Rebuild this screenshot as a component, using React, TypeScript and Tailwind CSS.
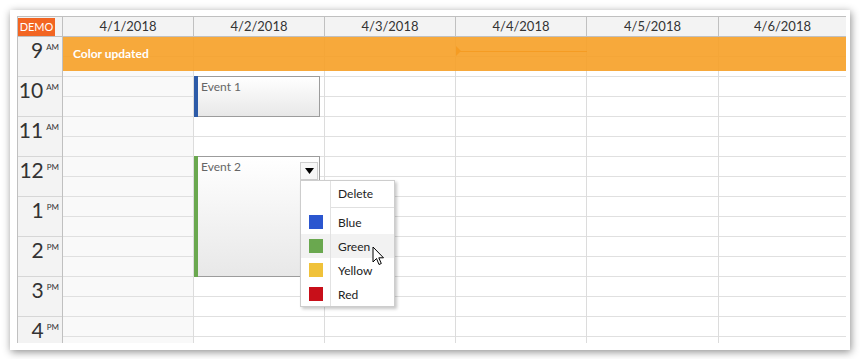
import React from 'react';

const days = [
  { label: '4/1/2018', w: 'w-[131px] border-r', cell: 'bg-[#f9f9f9]' },
  { label: '4/2/2018', w: 'w-[131px] border-r', cell: 'bg-white' },
  { label: '4/3/2018', w: 'w-[131px] border-r', cell: 'bg-white' },
  { label: '4/4/2018', w: 'w-[131px] border-r', cell: 'bg-white' },
  { label: '4/5/2018', w: 'w-[132px] border-r', cell: 'bg-white' },
  { label: '4/6/2018', w: 'w-[127px]', cell: 'bg-white' },
];

const hours = [
  ['9', 'AM'],
  ['10', 'AM'],
  ['11', 'AM'],
  ['12', 'PM'],
  ['1', 'PM'],
  ['2', 'PM'],
  ['3', 'PM'],
  ['4', 'PM'],
];

const colors = [
  { name: 'Blue', swatch: 'bg-[#2b56cf]', active: false },
  { name: 'Green', swatch: 'bg-[#6aa84f]', active: true },
  { name: 'Yellow', swatch: 'bg-[#f0c23a]', active: false },
  { name: 'Red', swatch: 'bg-[#c80f19]', active: false },
];

const Event: React.FC<{ text: string; bar: string; className: string }> = ({ text, bar, className }) => (
  <div
    className={`absolute border border-[#9c9c9c] bg-gradient-to-b from-white to-[#e8e8e8] pl-[6px] pt-[2px] text-[12px] leading-[15px] text-[#666] ${className}`}
  >
    <div className={`absolute -left-px -top-px -bottom-px w-[4px] ${bar}`} />
    {text}
  </div>
);

export default function App() {
  return (
    <div className="w-[860px] h-[359px] overflow-hidden bg-white pl-[10px] pt-[10px] font-['Lato',sans-serif]">
      <div className="w-[840px] h-[340px] bg-white pl-[7px] pt-[6px] shadow-[1px_2px_8px_rgba(0,0,0,0.45)]">
        <div className="relative w-[829px] h-[327px] overflow-hidden border-l border-t border-[#c0c0c0]">
          {/* header */}
          <div className="flex h-[20px] border-b border-[#c0c0c0] bg-[#f3f3f3]">
            <div className="w-[45px] border-r border-[#c0c0c0] pt-px">
              <div className="flex h-[18px] w-[37px] items-center justify-center bg-[#f26522] text-[11px] text-white">
                DEMO
              </div>
            </div>
            {days.map((d) => (
              <div
                key={d.label}
                className={`${d.w} flex items-center justify-center border-[#c0c0c0] text-[13px] text-[#333]`}
              >
                {d.label}
              </div>
            ))}
          </div>

          {/* body */}
          <div className="flex">
            <div className="w-[45px] shrink-0 border-r border-[#c0c0c0] bg-[#f3f3f3]">
              {hours.map(([h, m]) => (
                <div key={h} className="flex h-[40px] justify-end border-b border-[#d6d6d6] pr-[3px] pt-[1px] text-[#333]">
                  <span className="text-[21px] leading-[24px]">{h}</span>
                  <span className="ml-[3px] mt-[5px] text-[8px] leading-[9px]">{m}</span>
                </div>
              ))}
            </div>
            {days.map((d) => (
              <div key={d.label} className={`${d.w} shrink-0 border-[#dcdcdc] ${d.cell}`}>
                {Array.from({ length: 16 }).map((_, i) => (
                  <div key={i} className="h-[20px] border-b border-[#e0e0e0]" />
                ))}
              </div>
            ))}
          </div>

          {/* current time line in 4/4 */}
          <div className="absolute left-[438px] top-[34px] h-px w-[131px] bg-[#e5780a]" />
          <svg className="absolute left-[438px] top-[29px]" width="6" height="10" viewBox="0 0 6 10">
            <path d="M0 0 L5 5 L0 10 Z" fill="#e5780a" />
          </svg>

          {/* message bar */}
          <div className="absolute left-[45px] top-[20px] flex h-[34px] w-[783px] items-center bg-[rgba(246,160,38,0.9)] pl-[10px] text-[12px] font-bold text-white">
            Color updated
          </div>

          <Event text="Event 1" bar="bg-[#2d5ba8]" className="left-[176px] top-[59px] h-[41px] w-[126px]" />
          <Event text="Event 2" bar="bg-[#6aa84f]" className="left-[176px] top-[139px] h-[121px] w-[126px]" />

          {/* dropdown button */}
          <div className="absolute left-[282px] top-[145px] flex h-[18px] w-[18px] items-center justify-center border border-[#cfcfcf] bg-[#f7f7f7]">
            <svg width="9" height="6" viewBox="0 0 9 6">
              <path d="M0 0 H9 L4.5 6 Z" fill="#000" />
            </svg>
          </div>

          {/* context menu */}
          <div className="absolute left-[282px] top-[163px] w-[95px] border border-[#cdcdcd] bg-white text-[12px] text-[#222] shadow-[2px_2px_3px_rgba(0,0,0,0.22)]">
            <div className="relative">
              <div className="flex h-[24px] items-center pl-[37px] pt-px">Delete</div>
              <div className="h-[5px] pt-[2px] pl-[29px]">
                <div className="border-t border-[#e0e0e0]" />
              </div>
              {colors.map((c) => (
                <div key={c.name} className={`flex h-[24px] items-center ${c.active ? 'bg-[#f2f2f2]' : ''}`}>
                  <div className={`ml-[8px] h-[14px] w-[14px] ${c.swatch}`} />
                  <span className="ml-[15px] pt-px">{c.name}</span>
                </div>
              ))}
              <div className="absolute left-[29px] top-0 bottom-0 w-px bg-[#e2e2e2]" />
            </div>
          </div>

          {/* mouse pointer */}
          <svg className="absolute left-[354px] top-[229px]" width="14" height="21" viewBox="0 0 14 21">
            <path
              d="M1 1 L1 16 L4.5 12.5 L7 18.5 L9.3 17.5 L6.8 11.8 L11.5 11.8 Z"
              fill="#fff"
              stroke="#000"
              strokeWidth="1"
              strokeLinejoin="round"
            />
          </svg>
        </div>
      </div>
    </div>
  );
}
